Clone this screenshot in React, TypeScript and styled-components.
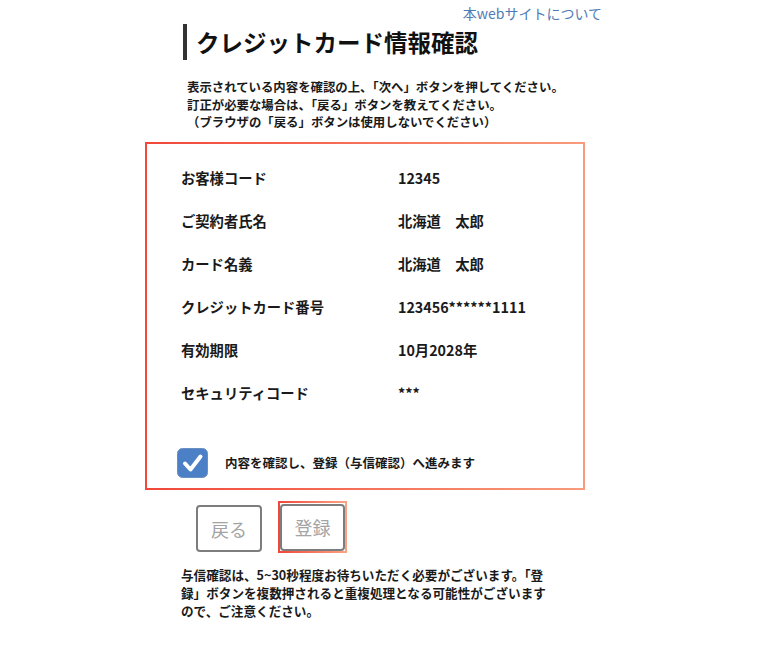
import React from 'react';
import styled, { createGlobalStyle } from 'styled-components';

const GlobalStyle = createGlobalStyle`
  html, body {
    margin: 0;
    padding: 0;
    background: #ffffff;
  }
  body {
    font-family: 'Noto Sans CJK JP', 'Noto Sans', sans-serif;
    color: #1a1a1a;
  }
`;

const Page = styled.div`
  width: 457px;
  margin-left: 145px;
  padding-top: 4px;
`;

const TopLink = styled.a`
  display: block;
  text-align: right;
  font-size: 14px;
  line-height: 18px;
  color: #4f7bb5;
  text-decoration: none;
`;

const Title = styled.h1`
  margin: 2px 0 0 38px;
  padding-left: 9px;
  border-left: 4px solid #333333;
  font-size: 23.5px;
  line-height: 36px;
  font-weight: 700;
  color: #111111;
`;

const Intro = styled.p`
  margin: 19px 0 0 42px;
  font-size: 12.4px;
  line-height: 17.5px;
  font-weight: 700;
  color: #1a1a1a;
`;

const ConfirmBox = styled.section`
  width: 440px;
  box-sizing: border-box;
  margin-top: 10px;
  border: 2px solid;
  border-image: linear-gradient(to right, #f2473a, #f89b7b) 1;
  padding: 12px 20px 10px 34px;
`;

const Row = styled.div`
  display: grid;
  grid-template-columns: 217px 1fr;
  height: 43px;
  align-items: center;
  font-size: 14.3px;
  font-weight: 700;
  color: #1a1a1a;
`;

const AgreeRow = styled.label`
  display: flex;
  align-items: center;
  gap: 17px;
  margin: 34px 0 0 -4px;
  font-size: 12.5px;
  font-weight: 700;
  color: #1a1a1a;
`;

const CheckMark = styled.svg`
  flex: none;
  display: block;
`;

const ButtonRow = styled.div`
  display: flex;
  align-items: center;
  gap: 16px;
  margin: 11px 0 0 51px;
`;

const FocusFrame = styled.span`
  display: inline-flex;
  padding: 1px 0 0 0;
  border: 2px solid;
  border-image: linear-gradient(to right, #f2473a, #f8a383) 1;
`;

const ActionButton = styled.button`
  width: 66px;
  height: 47px;
  box-sizing: border-box;
  border: 2px solid #7d7d7d;
  border-radius: 4px;
  background: #ffffff;
  color: #a3a3a3;
  font-family: inherit;
  font-size: 18px;
  padding: 0;
  margin-top: 4px;

  ${FocusFrame} & {
    margin-top: 0;
    width: 65px;
  }
`;

const Note = styled.p`
  margin: 13px 0 0 36px;
  font-size: 12.6px;
  line-height: 18px;
  font-weight: 700;
  color: #1a1a1a;
`;

const rows: [string, string][] = [
  ['お客様コード', '12345'],
  ['ご契約者氏名', '北海道　太郎'],
  ['カード名義', '北海道　太郎'],
  ['クレジットカード番号', '123456******1111'],
  ['有効期限', '10月2028年'],
  ['セキュリティコード', '***'],
];

export default function App() {
  return (
    <>
      <GlobalStyle />
      <Page>
        <TopLink href="#">本webサイトについて</TopLink>
        <Title>クレジットカード情報確認</Title>
        <Intro>
          表示されている内容を確認の上、「次へ」ボタンを押してください。
          <br />
          訂正が必要な場合は、「戻る」ボタンを教えてください。
          <br />
          （ブラウザの「戻る」ボタンは使用しないでください）
        </Intro>
        <ConfirmBox>
          {rows.map(([label, value]) => (
            <Row key={label}>
              <span>{label}</span>
              <span>{value}</span>
            </Row>
          ))}
          <AgreeRow>
            <CheckMark width="31" height="30" viewBox="0 0 31 30">
              <rect x="0.5" y="0.5" width="30" height="29" rx="5" fill="#4b80c7" stroke="#6a8fc2" />
              <path
                d="M8 15.5 L13.5 21.5 L23.5 8.5"
                fill="none"
                stroke="#ffffff"
                strokeWidth="4"
                strokeLinecap="round"
                strokeLinejoin="round"
              />
            </CheckMark>
            内容を確認し、登録（与信確認）へ進みます
          </AgreeRow>
        </ConfirmBox>
        <ButtonRow>
          <ActionButton>戻る</ActionButton>
          <FocusFrame>
            <ActionButton>登録</ActionButton>
          </FocusFrame>
        </ButtonRow>
        <Note>
          与信確認は、5~30秒程度お待ちいただく必要がございます。「登
          <br />
          録」ボタンを複数押されると重複処理となる可能性がございます
          <br />
          ので、ご注意ください。
        </Note>
      </Page>
    </>
  );
}
